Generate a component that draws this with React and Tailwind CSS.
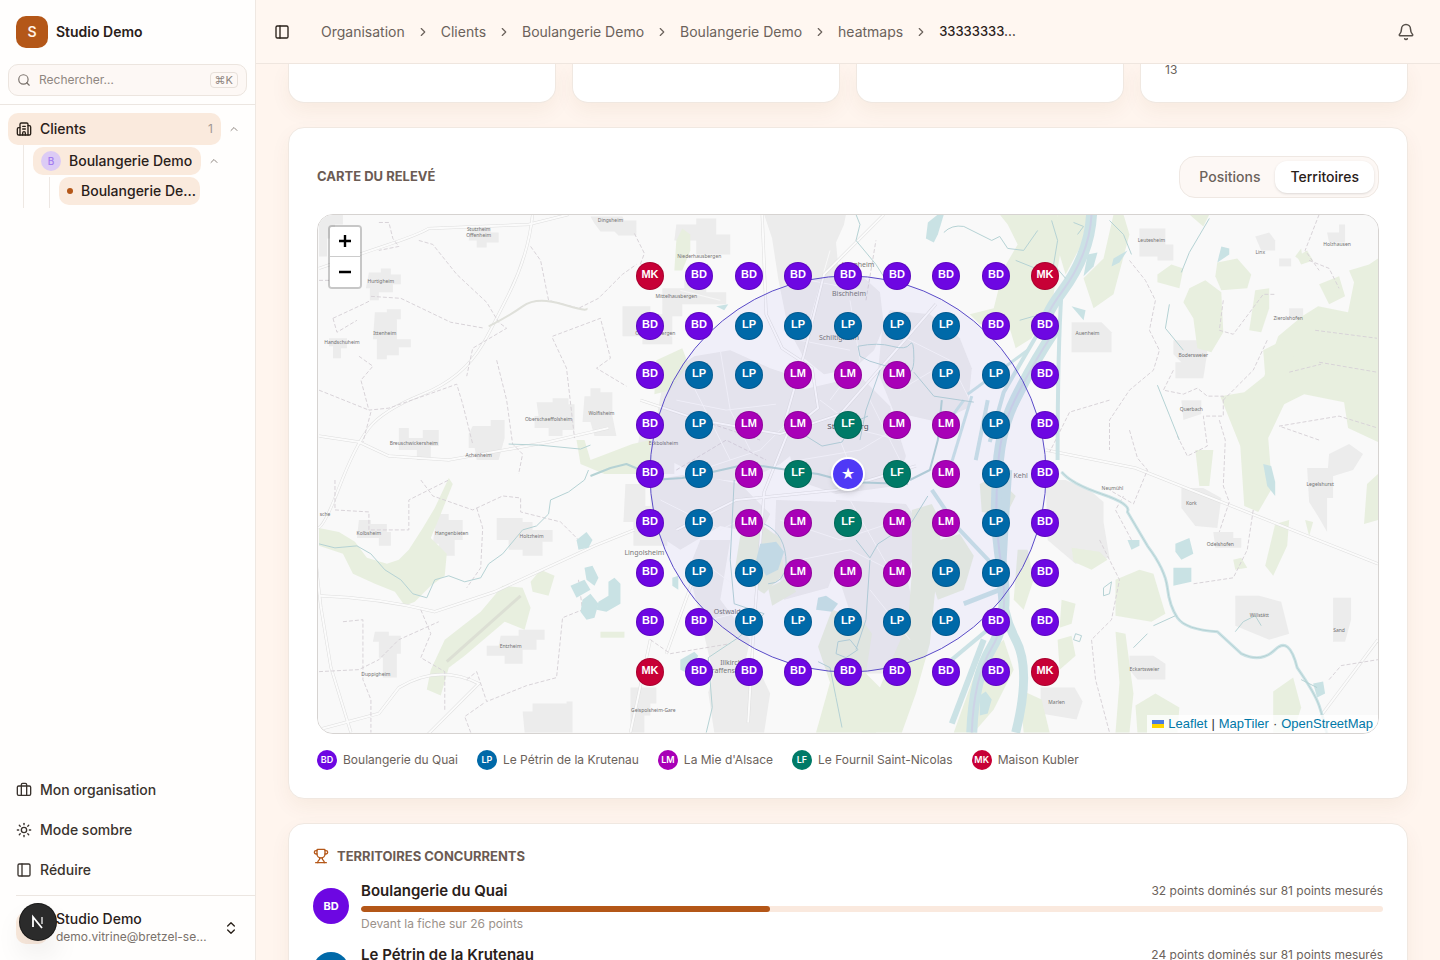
import React, { useState } from 'react';
import {
  Bell,
  Briefcase,
  Building2,
  ChevronRight,
  ChevronUp,
  ChevronsUpDown,
  PanelLeft,
  Search,
  Sun,
  Trophy,
} from 'lucide-react';

const competitors = {
  BD: { name: 'Boulangerie du Quai', color: 'bg-[#6d07e2]' },
  LP: { name: 'Le Pétrin de la Krutenau', color: 'bg-[#0069a8]' },
  LM: { name: "La Mie d'Alsace", color: 'bg-[#a800b7]' },
  LF: { name: 'Le Fournil Saint-Nicolas', color: 'bg-[#007a67]' },
  MK: { name: 'Maison Kubler', color: 'bg-[#c70036]' },
};

const grid = [
  'MK BD BD BD BD BD BD BD MK',
  'BD BD LP LP LP LP LP BD BD',
  'BD LP LP LM LM LM LP LP BD',
  'BD LP LM LM LF LM LM LP BD',
  'BD LP LM LF ** LF LM LP BD',
  'BD LP LM LM LF LM LM LP BD',
  'BD LP LP LM LM LM LP LP BD',
  'BD BD LP LP LP LP LP BD BD',
  'MK BD BD BD BD BD BD BD MK',
].map(row => row.split(' '));

const territories = [
  { code: 'BD', points: 32, ahead: 26, share: 40 },
  { code: 'LP', points: 24, ahead: 18, share: 30 },
];

const crumbs = ['Organisation', 'Clients', 'Boulangerie Demo', 'Boulangerie Demo', 'heatmaps'];

// Built-up areas
const towns = [
  'M590 216h32l2 4h12v15h-18l-4-4h-14l-6-8z',
  'M470 226h20v6h8v10h-12v5h-10v-7h-8z',
  'M318 214h24v10h-8v14h-8v18h-8z',
  'M368 272h12v-4h10v6h10v10h-8v8h-14v8h-9v-12h-4z',
  'M374 312h12v-3h14v10h-4v20h14v8h-12v8h-12v4h-10v-20h-4z',
  'M328 338h18v10h-6v10h-8v-12h-4z',
  'M536 402h16v-4h16v6h6v26h-12v6h-14v-8h-14v-12h4z',
  'M584 396h6v-8h10v4h12v24l4 20h-22l-4-14h-8z',
  'M472 426h18v-6h14v18l-6 22h-22l-2-12h-6v-14z',
  'M398 428h10v10h14v-8h16v16h-8v14h-14v-10h-18z',
  'M358 520h12v4h16v8h4v14h-12v-8h-22z',
  'M436 514h12v6h14v20h-8v16h-16v-12h-6z',
  'M496 518h26v4h10v8h20v12h-10v14h-20v-6h-14v-10h-12z',
  'M500 636h18v-6h26v10h-8v10h-14v14h-18v-8h-18v-10h12z',
  'M374 632h14v4h12v18h-4v24h-14v-20h-4v-16h-6z',
  'M522 712h10v-8h34v-2h6v31h-48z',
  'M630 688h26v16h-6v12h-6v17h-14z',
  'M622 306h28v8h22v30h-30v-8h-20z',
  'M662 288h22v-8h22v12h20v12h-44v12h-20z',
  'M676 224h20v-6h20v16h14v20h-34v-14h-22z',
  'M640 430h26v10h8v34h-30v-20h-8z',
  'M625 484h20v22h22v40h-34v-24h-10z',
  'M764 214h82l-2 10-8 18 2 22 20 8 22 20 4 34-10 24-20 18-30 6-20-16-16-30-10-50-6-40z',
  'M890 310l40 4 30 24 12 30-4 40-30 14-44-10-16-40 4-40z',
  'M664 376l30-20 36-6 40 18 24 8 20 24-4 40-30 24-36 18-40-4-40-20-8-40z',
  'M800 390l60-14 30 30 16 50-10 30-60 8-40-14-10-40z',
  'M650 480l40-6 50 10 30 30-10 20-40-8-40 24-30-20z',
  'M700 540h30l-10 60 30 40-8 36-30-6-14-60-10-40z',
  'M716 664h40l14 30-6 39h-50l-6-40z',
  'M776 500l60 2 16 26-24 60-44 12-10-50z',
  'M836 500l70 4 20 30-20 40 14 60-30 40h-26l-10-50-20-60z',
  'M1140 228h26v16h8v16h-16v-4h-18z',
  'M1256 236l14-4 6 8v10h-14z',
  'M1328 232h12v-8h6v18h-16z',
  'M1280 258h12v8h-12z',
  'M1072 322h30l10 10v20h-40z',
  'M1174 340h30l4 12-4 26h-28v-16h6l-8-8z',
  'M1182 400h20v14l-18 6z',
  'M1046 480h20l24 10 14 12v20l6 36-34 6-28-24z',
  'M1182 488h22l18 10-4 30-22-2-14-18z',
  'M1214 532h20v6h8v10h-26z',
  'M1308 468h26v30h-6v34l-8-14-10-16z',
  'M1236 596h24l22 6 8 32-20 6-34-14z',
  'M1334 598h18v22l-6 22h-12z',
  'M1130 656h24l12 8v16h-28l-8-10z',
  'M1041 688h34l8 14-6 18-36-6z',
  'M1290 308h14v10h-14z',
  'M1330 454l20-10 14 10-10 16-26 8z',
];

const forests = [
  'M676 240l6-12 8 6v16l-8 20h-8z',
  'M656 360l26-12 6 16-18 26-16 4z',
  'M590 460l-6-20h-8l4 24 24 10h46v-34l-18 4z',
  'M318 528l20 4 16 10 12 16 20 6 12-4 10-10 14-22 12-20 14-30 4 6-12 30-10 24 16 16-2 22-14 10-16 16-10 4-10-14-20-8-22-10-10-20-24-8z',
  'M444 640l36-28 22-26 20 2 8 20-6 22-20-8-40 34-16 12-8 28-14-6 4-20z',
  'M530 582l10-12 14 6-6 20-16-4z',
  'M600 632h24v6h-24z',
  'M1000 214h58l4 30-8 50-8 20-14 24-16 10-6-20-30-4-10-10 24-6 10-40 14-24-10-20z',
  'M1058 214h30l-6 30-16 30-6-20z',
  'M740 536l20-12 20 14 4 36-20 20-30-20z',
  'M768 588l20-10 8 14-24 14z',
  'M832 610l30 10 10 14-6 40 20 20-10 39h-60l14-50-12-36z',
  'M912 510l20-6 10 20-6 60-6 60-14 50-14 39h-40l20-50 26-60 4-50z',
  'M940 540l20-6 14 22-10 34-26 10-10-30z',
  'M980 484l16-8 20 20-10 20-24-4z',
  'M980 660l24-20 10 30-20 40-20 23h-20z',
  'M1018 550h10l6 30-10 30-10-10z',
  'M1020 690l22 10 8 33h-26z',
  'M1114 214h10l6 20-16 60-20 14-10-30 20-20z',
  'M1158 274l14-10 12 4-4 20-22-6z',
  'M1190 288l16-8 16 12 2 40-12 20-14-4-4-30-10-16z',
  'M1218 262l20-4 14 16-4 14-26 2-6-14z',
  'M1256 290l14-2v20l-8 24-12-2z',
  'M1298 256l10-6 6 10-12 4z',
  'M1190 214h20l-6 12z',
  'M1350 270l20-6 9-6v184l-30-14-4-26-40-8-20 10-16 34 4 50-14 24-14-6-4-60-20-50 24-4 20-16 14-40 24-20 16-10 30 6 6-30z',
  'M1264 350l20-10 10 16-8 20h-20z',
  'M1320 284l20-8 6 20-16 8z',
  'M1196 450h18l-4 36h-10z',
  'M1368 484l11-10v46l-14 4z',
  'M1276 524l14-4-2 26-14 30-8-10z',
  'M1116 580l24-10 14 4 12 40-14 8-36-6z',
  'M1116 632l10 2 8 60-4 39h-14l4-50z',
  'M1136 706l20-12 24 14-2 25h-40z',
  'M1274 692l20-14 8 30-8 25h-20z',
  'M1234 560l8-2 6 10-12 2z',
  'M1072 548l28 4 8 8-16 10-18-8z',
  'M1062 600l14 4-4 20-12 4zM1058 640l14-4 4 20-16 14z',
  'M1302 248l-6 8 8 6z',
  'M1306 520l8 2-4 14z',
];

const lakes = [
  'M576 540l10-8 6 8-4 8-10 2z',
  'M584 568l8-2 6 12-4 8-8-6z',
  'M570 586l14-6 6 10-14 8z',
  'M582 600l8-6 8 10-4 14-8 2-6-8z',
  'M608 582l6-4 6 6v20l-14 8-10-2 2-8 10-6z',
  'M760 544l16-2 8 10-6 18-12 6-10-16z',
  'M818 598l8-2 12 8-6 8-16-2z',
  'M680 660l14-8 4 4-10 18-8-4z',
  'M672 578l6-2v14l-6-4z',
  'M928 222l10-8h6l-6 20-4 8-8-4z',
  'M716 306l12-2-4 6z',
  'M1222 246l8 2v6l-12 8z',
  'M1088 254l10-2-4 14-10 10z',
  'M1114 258l14-8-8 12-8 4z',
  'M1128 540h12v6l-8 4z',
  'M1264 464l8 2 4 16v14l-8-10z',
  'M1176 544l14-6 4 16-12 6-6-8z',
  'M1174 568h18v14l-18 4z',
  'M1314 684l10-2 2 12-8 4z',
  'M1072 306l14 4-2 10z',
  'M980 696l6-4 6 8-4 14-8 2z',
];

// Rivers and canals: path, stroke width
const rivers = [
  ['M1092 214q-2 40-30 78t-8 40q-20 30-38 66t-18 80q-4 40 4 90t-10 80-20 85', 11],
  ['M1062 290q-4 60-4 170', 4],
  ['M1008 470q-4 60-6 100t14 70 0 93', 9],
  ['M1040 330l-36 62-14 50', 4],
  ['M1028 350l-60 44', 3],
  ['M1046 346l-30 60', 4],
  ['M972 396l-20 66', 3],
  ['M964 400l-22 30', 3],
  ['M988 400l-12 60', 4],
  ['M1000 590l-36 14', 5],
  ['M1000 620l-48 40', 4],
  ['M984 640l-32 84', 6],
  ['M932 490l26 38 38 40', 4],
  ['M1062 472q10 12 40 22t26 18l20 34q18 24 20 42t10 30 40 14l24 22q20 10 34-4t22 18q18 26 22 38t8 29', 3],
  ['M318 544l16 4 22-2 14 8 14 16 16 10 12 14 14 4 8-18 14-4 16 6 16-4 8-14 14-10 20-24 14-4 12-12 2-14 18-8 16-12 4-10', 1],
  ['M508 444l30 1 42 4 10-4', 1],
  ['M590 476l20-8 16-4 14 6 12 10 30-2 30-6 36-8 40 6 30 4 30 8 60 2', 2],
  ['M910 480l20-10 8-30 4-40', 2],
  ['M944 232q8-8 20-6l28 14 8-4 8 12 16 2 14-20', 1],
  ['M856 214l4 10-4 16 20 24 14 22', 1],
  ['M858 346q20-4 34 0t18-2 4 14-12 14-22-8-20-8zM914 372l20 24 40 6', 1],
  ['M806 436l16 10 20-4 12-20 14-6M880 370l-14 40-6 30', 1],
  ['M734 480l-4 80 4 44 30 10-26 24-30 20 4 50-6 25', 1],
  ['M764 524q22 10 22 40-2 20-18 20', 1],
  ['M856 540l14 18 8-14 34-22 16-26', 1],
  ['M1170 304l-4 24 18 22M1210 218l-20 34-8 20', 1],
  ['M1158 385l12 30 10 25', 1],
  ['M1154 626l22-10M1134 648l14-14', 1],
  ['M1236 632l8-10 12-6 6 10', 1],
  ['M1302 680l16 8', 1],
  ['M1104 588l8-6-2 12-6 2zM1076 634l6 2-2 6-6-2z', 1],
  ['M870 560l-4 60-10 30M818 662l12 6 6 30 6 30M838 642l12-2 8 10-12 8-10-4z', 1],
  ['M1052 220l6 20-4 24 12 14M1074 222l10 4-6 8M1110 220l14 14 8 20', 1],
  ['M1016 260l20 8 14-4M1020 320l14-4 12 2', 1],
];

// Administrative boundaries and small paths
const boundaries = [
  'M378 222l10 0 4 16 6 8-20 4',
  'M418 240l14 4 24 30 30 28 12 20 8 6-34 20-6 28',
  'M530 246l10 14 8 40 30 8 20-10 24-24 14-10',
  'M370 296l30 2 50 24 34 6',
  'M318 280l26 0M332 318l30-14 8-4M332 318l4 14 20-12',
  'M358 356l14 10-12 14 8 30 20-2 40-14 28-10 6 20 10 40',
  'M496 360l10 40 6 44 10 10-4 20',
  'M552 336l48-18 10 40-14 10 30 18',
  'M552 338l14 30 8 70',
  'M318 390l30 12 20 8M370 412l-8 30',
  'M334 480l0 30 34 2 0 18 40 0 0-30 40-20',
  'M420 480l12 16 40 14 30-14 18 2 0 14 40 10 20 20',
  'M476 508l6 20-2 40-14 20',
  'M420 610l10 24-10 24 24 14 0 40',
  'M318 672l40-2 20-10 20-20 40-18',
  'M466 680l10-8 10 30 40-16 30-8 6-60 20-8-4-30',
  'M342 622l20-2 0 60 8 20 0 33',
  'M470 733l-6-16 20-14',
  'M634 233l10 20-6 16',
  'M866 300l10-60',
  'M1130 260l16 20 10 20-6 30 10 20-6 20-24 20-20 30 0 30',
  'M1110 400l-40 12-20 40',
  'M1174 370l-10 20 20 4 14-6 10 8 16 0 0 20-20 0 4 30-20 10-10-20',
  'M1224 300l-4 30 14 4 30-40 12 0',
  'M1220 420l6 20-2 46 6 16-10 30',
  'M1268 340l-14 30-10 10-20 20',
  'M1130 430l8 28 10 12-14 34-24-14',
  'M1100 540l20 40-8 40-20 20 4 40 14 53',
  'M1254 510l-6 40-14 28-40 6',
  'M1320 440l-40-14 60-10 39 12',
  'M1316 330l62 8M1320 362l58 10M1290 372l32-8',
  'M1330 680l12-14 37-6',
  'M1310 260l20 8 10 20M1320 214l-14 36 14 20',
  'M1132 540l-16-30 8-14',
  'M650 640l20 14 60-10',
  'M700 420l60 20M676 470l50-30 40 20',
];

const roads = [
  'M318 268q40-14 70-24t40-16l100-4 40-10',
  'M532 214q-4 40-24 80t-26 50q-20 34-60 50t-54 34-30 60-22 40 4 80l10 60 20 65',
  'M318 596q60 2 116 16l60-20 100-46 40-16',
  'M318 730l60-16 20-26q40-24 80-4l-60 60',
  'M318 436l40 6 30 14 60 4 100-18 60-14',
  'M762 214l4 100 16 34 30 20 6 40-30 24-24 60-10 130-6 101',
  'M640 400l60 20 80 14 60-20 70-80 26-30',
  'M676 530l60-30 100-10 80-24',
  'M884 214l-60 60-20 80-20 70',
  'M1046 450l90 18 243 96',
  'M1379 640l-60 80',
  'M650 640l-20 93M700 560l-34 94',
];

const streets = [
  'M676 400l50 10 50-6M690 380l40 80M720 350l10 60 20 40M700 470l60-20 40-40',
  'M770 290l40-10 50 10M830 250l-20 70M850 300l10 60-30 40M800 340l50 10',
  'M820 400l40 30 40 10M840 440l20 50M800 460l60-10 50-30M870 400l30 60',
  'M780 520l60 20 60-20M850 500l40 70M800 560l50-10 60 30M870 590l40 50',
  'M700 560l40 30M710 620l40-10M660 500l60 30 40-20M890 330l60 30 20 40',
  'M900 390l50-30M680 290l40 10M640 320l40 20',
];

const labels = [
  ['Dingsheim', 610, 222], ['Stutzheim', 478, 231], ['Offenheim', 478, 237], ['Hurtigheim', 380, 283],
  ['Ittenheim', 384, 335], ['Handschuheim', 341, 344], ['Oberschaeffolsheim', 548, 421],
  ['Wolfisheim', 601, 415], ['Breuschwickersheim', 413, 445], ['Achenheim', 478, 457],
  ['Eckbolsheim', 663, 445], ['Kolbsheim', 368, 535], ['Hangenbieten', 451, 535],
  ['Holtzheim', 531, 538], ['Entzheim', 510, 648], ['Duppigheim', 375, 676],
  ['Niederhausbergen', 699, 258], ['Mittelhausbergen', 676, 298], ['Oberhausbergen', 655, 335],
  ['Geispolsheim-Gare', 653, 712], ['Leutesheim', 1152, 242], ['Linx', 1261, 254],
  ['Holzhausen', 1338, 246], ['Auenheim', 1088, 335], ['Zierolshofen', 1289, 320],
  ['Bodersweier', 1194, 357], ['Querbach', 1192, 411], ['Neumühl', 1113, 490], ['Kork', 1192, 505],
  ['Odelshofen', 1221, 546], ['Legelshurst', 1321, 486], ['Willstätt', 1260, 617],
  ['Sand', 1340, 632], ['Eckartsweier', 1145, 671], ['Marlen', 1057, 704], ['sche', 324, 516],
];

const bigLabels = [
  ['Hœnheim', 858, 267], ['Bischheim', 849, 296], ['Schiltigheim', 839, 340], ['Lingolsheim', 644, 555],
  ['Ostwald', 727, 614], ['Illkirch-', 732, 665], ['Graffenstaden', 730, 673], ['Kehl', 1021, 478],
];

const MapBackground = () => (
  <svg
    className="absolute inset-0 h-full w-full"
    viewBox="317 214 1062 520"
    preserveAspectRatio="xMidYMid slice"
    aria-hidden="true"
  >
    <rect x="317" y="214" width="1062" height="520" fill="#f9f9f9" />
    <g fill="#ececec">{towns.map(d => <path key={d} d={d} />)}</g>
    <g fill="#e8efdf">{forests.map(d => <path key={d} d={d} />)}</g>
    <g fill="none" stroke="#f8f8f8" strokeWidth="1">{streets.map(d => <path key={d} d={d} />)}</g>
    <g fill="none" stroke="#dedede" strokeWidth="3">{roads.map(d => <path key={d} d={d} />)}</g>
    <g fill="none" stroke="#fbfbfb" strokeWidth="2">{roads.map(d => <path key={d} d={d} />)}</g>
    <g fill="none" stroke="#d8d3d8" strokeWidth="1" strokeDasharray="4 2">
      {boundaries.map(d => <path key={d} d={d} />)}
    </g>
    <g fill="#c9e2e4">{lakes.map(d => <path key={d} d={d} />)}</g>
    <g fill="none" strokeLinejoin="round">
      {rivers.map(([d, width]) => (
        <path key={d} d={d} stroke={width > 2 ? '#cbe2e5' : '#b5d2d4'} strokeWidth={width} />
      ))}
      <path d={rivers[0][0]} stroke="#cdd3e6" strokeWidth="2" />
      <path d={rivers[13][0]} stroke="#b5d2d4" strokeWidth="1" />
    </g>
    <path d="M446 662l74-66" stroke="#dcdfd4" strokeWidth="3" />
    <path d="M488 326q20-10 34-20t40-2 24 4" stroke="#dfe0da" strokeWidth="2" fill="none" />
    <g fill="#707070" fontSize="5" fontFamily="Noto Sans, sans-serif" textAnchor="middle">
      {labels.map(([name, x, y]) => <text key={name} x={x} y={y}>{name}</text>)}
    </g>
    <g fill="#777777" fontSize="7" fontFamily="Noto Sans, sans-serif" textAnchor="middle">
      {bigLabels.map(([name, x, y]) => <text key={name} x={x} y={y}>{name}</text>)}
      <text x="848" y="429" fontSize="8" fill="#555555">Strasbourg</text>
    </g>
  </svg>
);

const Marker = ({ code, row, col }) => {
  // offsets from the middle of the map, in pixels
  const style = {
    left: Math.floor((col - 4) * 49.4),
    top: Math.round((row - 4) * 49.4),
  };
  if (code === '**') {
    return (
      <button
        type="button"
        aria-label="Votre établissement"
        style={style}
        className="absolute flex size-[34px] -translate-1/2 items-center justify-center rounded-full border-2 border-white bg-[#4f39f6] text-sm leading-none text-white shadow-md"
      >
        ★
      </button>
    );
  }
  return (
    <button
      type="button"
      style={style}
      className={`absolute flex size-7 -translate-1/2 items-center justify-center rounded-full border border-black/15 pb-[3px] font-['Liberation_Sans',sans-serif] text-[11px] leading-none font-bold text-white ${competitors[code].color}`}
    >
      {code}
    </button>
  );
};

const SurveyMap = () => (
  <div className="relative mt-4 h-[520px] overflow-hidden rounded-2xl border border-[#d6d3d1] bg-[#f9f9f9]">
    <MapBackground />
    <div className="absolute top-1/2 left-1/2 size-0">
      <div className="absolute size-[397px] -translate-1/2 rounded-full border border-[#5a4bc8] bg-[#4f39f6]/5" />
      {grid.map((cells, row) =>
        cells.map((code, col) => <Marker key={`${row}-${col}`} code={code} row={row} col={col} />)
      )}
    </div>
    <div className="absolute top-2.5 left-2.5 flex flex-col overflow-hidden rounded border-2 border-black/20 bg-clip-padding">
      <button type="button" aria-label="Zoom avant" className="flex size-[30px] items-center justify-center border-b border-[#cccccc] bg-white pb-px">
        <svg width="12" height="12" viewBox="0 0 12 12" stroke="#000" strokeWidth="2.4"><path d="M6 0v12M0 6h12" /></svg>
      </button>
      <button type="button" aria-label="Zoom arrière" className="flex size-[30px] items-center justify-center bg-white pb-px">
        <svg width="12" height="12" viewBox="0 0 12 12" stroke="#000" strokeWidth="2.4"><path d="M0 6h12" /></svg>
      </button>
    </div>
    <div className="absolute right-0 bottom-0 flex items-center gap-1 bg-white/80 px-[5px] font-['Liberation_Sans',sans-serif] text-[13px] leading-[18px] text-[#333333]">
      <a href="#leaflet" className="flex items-center gap-1 text-[#0078a8]">
        <svg width="12" height="8" viewBox="0 0 12 8"><path fill="#4c7be1" d="M0 0h12v4H0z" /><path fill="#ffd500" d="M0 4h12v4H0z" /></svg>
        Leaflet
      </a>
      <span>|</span>
      <a href="#maptiler" className="text-[#0078a8]">MapTiler</a>
      <span>·</span>
      <a href="#osm" className="text-[#0078a8]">OpenStreetMap</a>
    </div>
  </div>
);

const Sidebar = () => (
  <aside className="flex w-64 shrink-0 flex-col border-r border-[#efe8e2] bg-[#fffefd]">
    <div className="flex h-16 items-center gap-2 px-4">
      <div className="flex size-8 items-center justify-center rounded-[10px] bg-[#b45718] text-sm font-semibold text-[#fff1e6]">S</div>
      <span className="text-sm font-semibold">Studio Demo</span>
    </div>
    <div className="border-b border-[#ece6e1] px-2 pb-2">
      <label className="flex h-8 items-center gap-2 rounded-[10px] border border-[#ece5df] bg-[#fdf8f5] px-2">
        <Search className="size-3.5 text-[#79716b]" />
        <input
          type="search"
          aria-label="Rechercher"
          placeholder="Rechercher…"
          className="min-w-0 flex-1 bg-transparent text-xs outline-none placeholder:text-[#8f8781]"
        />
        <kbd className="rounded border border-[#e7e0da] px-1 font-['Inter','DejaVu_Sans',sans-serif] text-[11px] leading-[14px] text-[#8f8781]">⌘K</kbd>
      </label>
    </div>

    <nav className="flex-1 p-2">
      <div className="flex items-center">
        <a href="#clients" className="flex h-8 flex-1 items-center gap-2 rounded-[10px] bg-[#faeadd] px-2 text-sm font-medium">
          <Building2 className="size-4" />
          <span className="flex-1">Clients</span>
          <span className="text-xs font-normal text-[#a09892]">1</span>
        </a>
        <button type="button" aria-label="Replier les clients" className="flex w-[26px] justify-center text-[#8f8781]">
          <ChevronUp className="size-3" />
        </button>
      </div>
      <ul className="ml-[15px] border-l border-[#eee8e3] pt-0.5 pl-[9px]">
        <li>
          <div className="flex items-center">
            <a href="#client" className="flex h-7 w-[168px] items-center gap-2 rounded-[10px] bg-[#faeadd] px-2 text-sm font-medium">
              <span className="flex size-5 shrink-0 items-center justify-center rounded-full bg-[#dccbf5] text-[10px] text-[#a37cf0]">B</span>
              <span className="truncate">Boulangerie Demo</span>
            </a>
            <button type="button" aria-label="Replier le client" className="flex w-[26px] justify-center text-[#8f8781]">
              <ChevronUp className="size-3" />
            </button>
          </div>
          <ul className="mt-0.5 ml-4 border-l border-[#eee8e3] pb-[3px] pl-[9px]">
            <li>
              <a href="#fiche" className="flex h-7 w-[141px] items-center gap-2 rounded-[10px] bg-[#faeadd] pr-1 pl-2 text-sm font-medium">
                <span className="size-1.5 shrink-0 rounded-full bg-[#b45718]" />
                <span className="truncate">Boulangerie De…</span>
              </a>
            </li>
          </ul>
        </li>
      </ul>
    </nav>

    <div className="flex flex-col pb-[5px] text-sm font-medium text-[#3a332e]">
      <a href="#organisation" className="flex h-10 items-center gap-2 px-4">
        <Briefcase className="size-4" />
        Mon organisation
      </a>
      <button type="button" className="flex h-10 items-center gap-2 px-4">
        <Sun className="size-4" />
        Mode sombre
      </button>
      <button type="button" className="flex h-10 items-center gap-2 px-4">
        <PanelLeft className="size-4" />
        Réduire
      </button>
    </div>
    <button type="button" className="ml-4 flex h-[65px] items-center gap-2 border-t border-[#ece6e1] pr-4 text-left">
      <span className="size-8 shrink-0 rounded-[10px] bg-[#faeadd]" />
      <span className="min-w-0 flex-1">
        <span className="block text-sm leading-[18px] font-medium">Studio Demo</span>
        <span className="block truncate text-xs leading-[18px] text-[#79716b]">demo.vitrine@bretzel-se…</span>
      </span>
      <ChevronsUpDown className="ml-2 size-4" />
    </button>
  </aside>
);

const Header = () => (
  <header className="flex h-16 shrink-0 items-center border-b border-[#efe6df] bg-[#fff7f1] px-4">
    <button type="button" aria-label="Basculer le menu" className="mr-[29px] flex size-5 items-center justify-center">
      <PanelLeft className="size-4" />
    </button>
    <nav aria-label="Fil d'Ariane" className="flex flex-1 items-center gap-[11px] text-sm text-[#6b625b]">
      {crumbs.map((crumb, i) => (
        <React.Fragment key={i}>
          <a href="#fil">{crumb}</a>
          <ChevronRight className="size-3.5" />
        </React.Fragment>
      ))}
      <span className="text-[13px] font-medium text-[#292019]">33333333…</span>
    </nav>
    <button type="button" aria-label="Notifications" className="flex size-9 items-center justify-center text-[#57504a]">
      <Bell className="size-[18px]" />
    </button>
  </header>
);

const App = () => {
  const [view, setView] = useState('Territoires');

  return (
    <div className="flex h-screen overflow-hidden bg-[#fff5ee] font-['Inter','Noto_Sans',sans-serif] text-[#292019]">
      <Sidebar />
      <div className="flex min-w-0 flex-1 flex-col">
        <Header />
        <main className="flex-1 overflow-y-auto px-8 [scrollbar-width:none]">
          <div className="grid grid-cols-4 gap-4">
            {['', '', '', '13'].map((value, i) => (
              <div
                key={i}
                className="h-[39px] rounded-b-2xl border border-t-0 border-[#f0e8e1] bg-white px-6 text-xs leading-3 text-[#6b625b] shadow-[0_8px_20px_rgba(120,70,20,0.06)]"
              >
                {value}
              </div>
            ))}
          </div>

          <section className="mt-6 rounded-2xl border border-[#f0e8e1] bg-white p-7 shadow-[0_8px_20px_rgba(120,70,20,0.06)]">
            <div className="flex items-center justify-between">
              <h2 className="text-[13px] font-bold text-[#6b5b53] uppercase">Carte du relevé</h2>
              <div className="flex rounded-2xl border border-[#efe8e3] bg-[#fdf8f5] p-1">
                {['Positions', 'Territoires'].map(name => (
                  <button
                    key={name}
                    type="button"
                    onClick={() => setView(name)}
                    className={`h-8 rounded-xl px-[15px] text-sm font-medium ${
                      view === name ? 'bg-white text-[#292019] shadow-sm' : 'text-[#6b625b]'
                    }`}
                  >
                    {name}
                  </button>
                ))}
              </div>
            </div>
            <SurveyMap />
            <ul className="mt-4 flex flex-wrap gap-x-[19px] gap-y-2 text-xs text-[#6b625b]">
              {Object.entries(competitors).map(([code, { name, color }]) => (
                <li key={code} className="flex items-center gap-1.5">
                  <span className={`flex size-5 items-center justify-center rounded-full text-[9px] font-semibold text-white ${color}`}>
                    {code}
                  </span>
                  {name}
                </li>
              ))}
            </ul>
          </section>

          <section className="mt-6 rounded-2xl border border-[#f0e8e1] bg-white p-6 shadow-[0_8px_20px_rgba(120,70,20,0.06)]">
            <h2 className="flex items-center gap-2 text-[13px] leading-4 font-bold text-[#6b5b53] uppercase">
              <Trophy className="size-4 text-[#b45718]" />
              Territoires concurrents
            </h2>
            <ul className="mt-4 space-y-3">
              {territories.map(({ code, points, ahead, share }) => (
                <li key={code} className="flex items-center gap-3">
                  <span className={`flex size-9 shrink-0 items-center justify-center rounded-full text-[11px] font-bold text-white ${competitors[code].color}`}>
                    {code}
                  </span>
                  <div className="flex-1">
                    <div className="flex items-center justify-between">
                      <span className="text-[15px] leading-[22px] font-semibold">{competitors[code].name}</span>
                      <span className="text-xs leading-[22px] text-[#6b625b]">{points} points dominés sur 81 points mesurés</span>
                    </div>
                    <div className="mt-1 h-1.5 overflow-hidden rounded-full bg-[#fae9de]">
                      <div className="h-full rounded-full bg-[#b45718]" style={{ width: `${share}%` }} />
                    </div>
                    <p className="mt-1 text-xs leading-4 text-[#9a918a]">Devant la fiche sur {ahead} points</p>
                  </div>
                </li>
              ))}
            </ul>
          </section>
        </main>
      </div>

      <button
        type="button"
        aria-label="Outils de développement"
        className="fixed bottom-5 left-5 flex size-9 items-center justify-center rounded-full bg-[#2b2b2b] shadow-[0_0_0_1px_#171717,0_16px_32px_-8px_rgba(0,0,0,0.24)]"
      >
        <svg width="16" height="16" viewBox="0 0 16 16" fill="none" stroke="#fff" strokeWidth="1.8">
          <path d="M3 13V3l9 11" />
          <path d="M12 3v7" stroke="#bdbdbd" />
        </svg>
      </button>
    </div>
  );
};

export default App;
